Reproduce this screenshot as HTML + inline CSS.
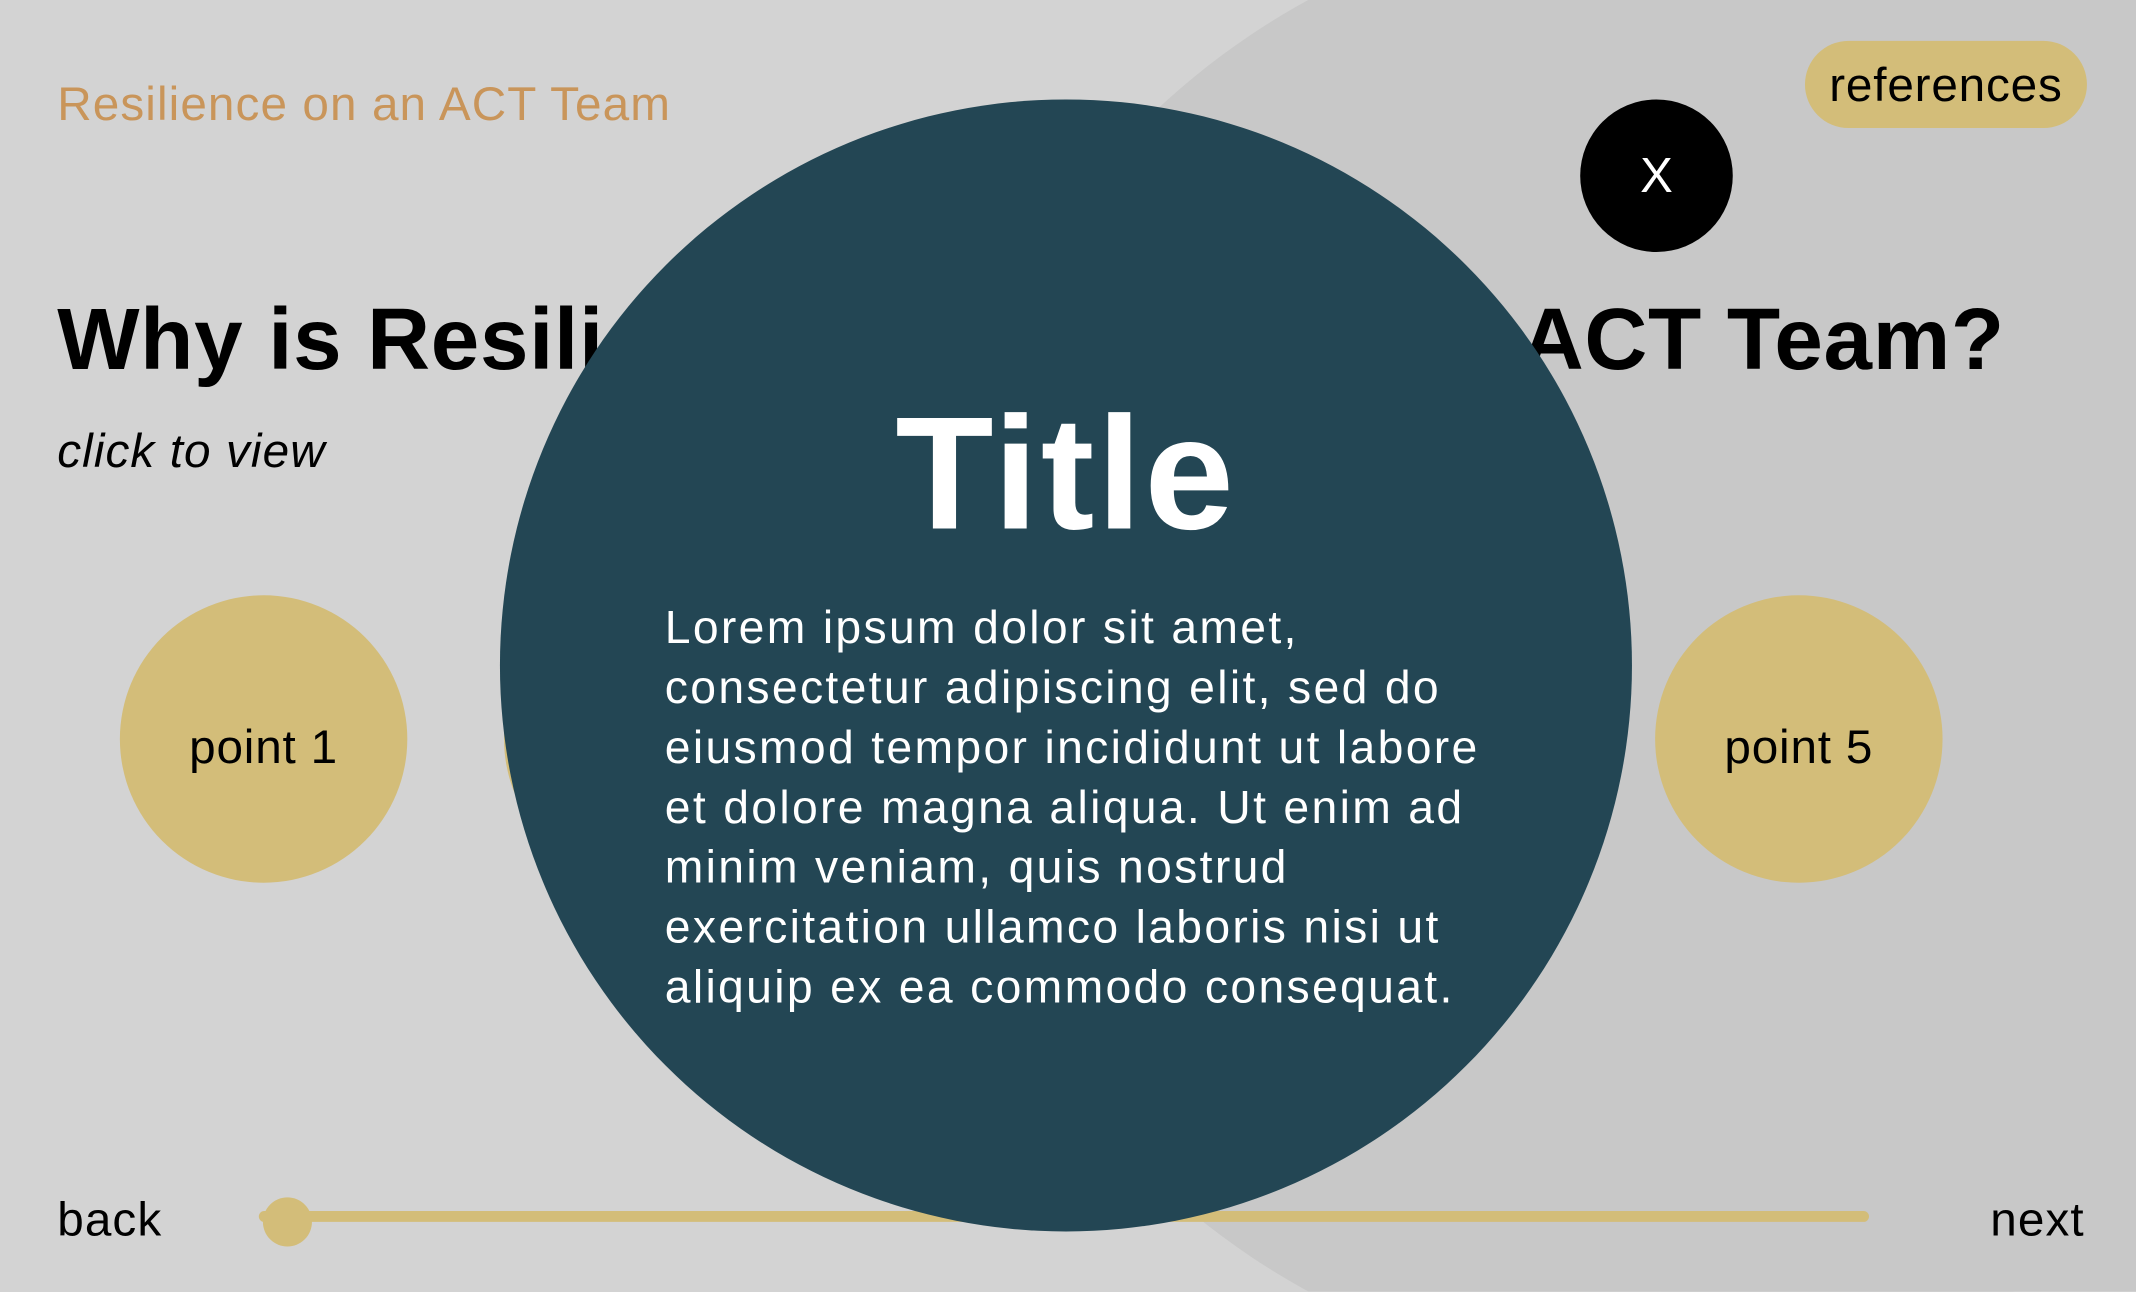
<!DOCTYPE html>
<html><head><meta charset="utf-8"><style>
html,body{margin:0;padding:0;width:2136px;height:1292px;overflow:hidden;background:#d3d3d3;}
#s{position:absolute;left:0;top:0;width:1568px;height:948px;transform:scale(1.36224);transform-origin:0 0;overflow:hidden;font-family:"Liberation Sans",sans-serif;}
.a{position:absolute;}
.c{position:absolute;border-radius:50%;}
</style></head><body><div id="s">
<div class="c" style="left:679px;top:-66px;width:1080px;height:1080px;background:#c8c8c8"></div>
<div class="a" style="left:1219px;top:0;width:349px;height:948px;background:#c8c8c8"></div>
<div class="a" style="left:42px;top:57px;font-size:35px;color:#c9955a;white-space:nowrap;letter-spacing:0.8px">Resilience on an ACT Team</div>
<div class="a" style="left:1325px;top:30px;width:207px;height:64px;border-radius:32px;background:#d3bd79;font-size:35px;line-height:66px;text-align:center;color:#000;letter-spacing:0.6px">references</div>
<div class="a" style="left:42px;top:212px;font-size:64px;font-weight:bold;color:#000;white-space:nowrap;letter-spacing:0.5px">Why is Resilience important on an ACT Team?</div>
<div class="a" style="left:42px;top:312px;font-size:35px;font-style:italic;color:#000;letter-spacing:0.8px">click to view</div>
<div class="c" style="left:88px;top:437px;width:211px;height:211px;background:#d3bd79;font-size:35px;line-height:223px;text-align:center;letter-spacing:0.6px">point 1</div>
<div class="c" style="left:370px;top:437px;width:211px;height:211px;background:#d3bd79"></div>
<div class="c" style="left:1215px;top:437px;width:211px;height:211px;background:#d3bd79;font-size:35px;line-height:223px;text-align:center;letter-spacing:0.6px">point 5</div>
<div class="a" style="left:190px;top:889px;width:1182px;height:8px;border-radius:4px;background:#d3bd79"></div>
<div class="c" style="left:193px;top:879px;width:36px;height:36px;background:#d3bd79"></div>
<div class="a" style="left:42px;top:876px;font-size:35px;letter-spacing:0.8px">back</div>
<div class="a" style="left:1461px;top:876px;font-size:35px;letter-spacing:0.8px">next</div>
<div class="c" style="left:367px;top:73px;width:831px;height:831px;background:#234654"></div>
<div class="a" style="left:367px;top:280px;width:831px;text-align:center;font-size:118px;font-weight:bold;color:#fff;letter-spacing:2px">Title</div>
<div class="a" style="left:488px;top:439px;width:680px;font-size:34px;line-height:44px;color:#fff;letter-spacing:1.7px;white-space:nowrap">Lorem ipsum dolor sit amet,<br>consectetur adipiscing elit, sed do<br>eiusmod tempor incididunt ut labore<br>et dolore magna aliqua. Ut enim ad<br>minim veniam, quis nostrud<br>exercitation ullamco laboris nisi ut<br>aliquip ex ea commodo consequat.</div>
<div class="c" style="left:1160px;top:73px;width:112px;height:112px;background:#000;color:#fff;font-size:36px;line-height:112px;text-align:center">X</div>
</div></body></html>
